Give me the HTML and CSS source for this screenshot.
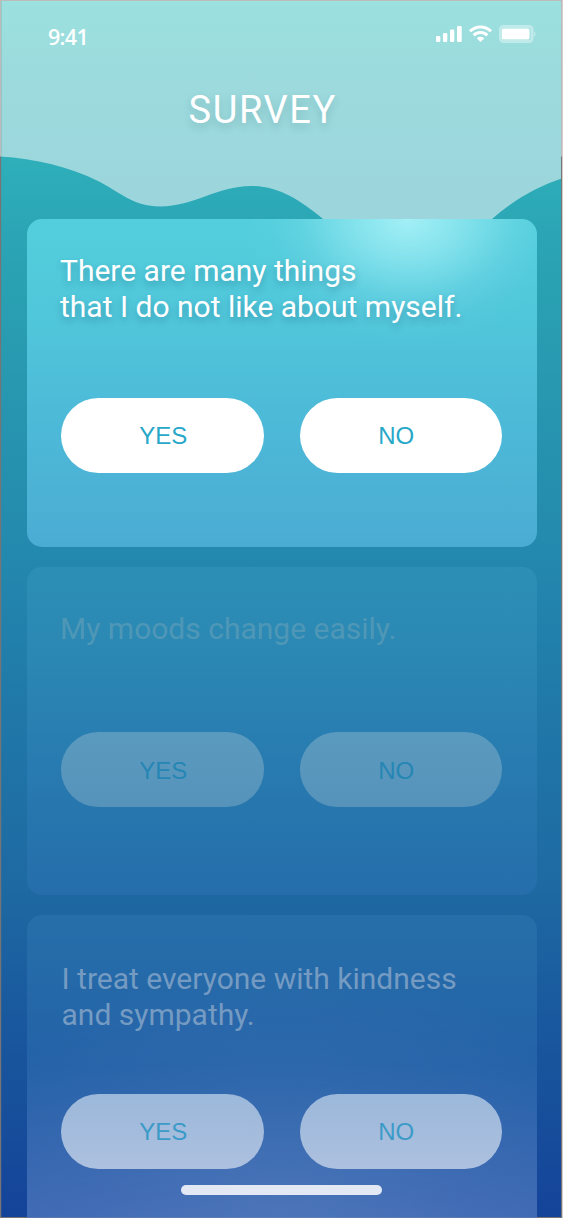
FILE: index.html
```html
<!DOCTYPE html>
<html lang="en">
<head>
<meta charset="utf-8">
<title>Survey</title>
<link rel="stylesheet" href="styles.css">
</head>
<body>
<main class="screen">
  <header class="header">
    <svg class="wave" viewBox="0 0 563 219" preserveAspectRatio="none" aria-hidden="true">
      <defs>
        <linearGradient id="sky" x1="0" y1="0" x2="0" y2="1">
          <stop offset="0" stop-color="#9be1df"/>
          <stop offset=".3" stop-color="#9cdbdd"/>
          <stop offset="1" stop-color="#9cd5dc"/>
        </linearGradient>
      </defs>
      <path fill="url(#sky)" d="M0 0H563V178C536 187 514 200 492 219H323C300 200 279 186 251 186C217 186 194 206.500 160 206.500C133 206.500 119 191.500 99 181.500C70 167 35 158.500 0 156.500Z"/>
    </svg>
    <div class="header-content">
      <div class="status">
        <span class="time">9:41</span>
        <svg class="indicators" width="102" height="20" viewBox="0 0 102 20" aria-hidden="true">
          <g fill="#fff">
            <rect x="1" y="12" width="4.300" height="6" rx="1.200"/>
            <rect x="8" y="9" width="4.300" height="9" rx="1.200"/>
            <rect x="15" y="5.500" width="4.300" height="12.500" rx="1.200"/>
            <rect x="22" y="2" width="4.700" height="16" rx="1.200"/>
            <path d="M45.500 18l-3.800-3.700a5.600 5.600 0 0 1 7.600 0z"/>
            <rect x="67" y="4.500" width="27.500" height="11" rx="1.500"/>
          </g>
          <g fill="none" stroke="#fff" stroke-width="3">
            <path d="M38.700 11.400a9.700 9.700 0 0 1 13.600 0"/>
            <path d="M35 7.300a14.900 14.900 0 0 1 21 0"/>
          </g>
          <rect x="65.500" y="2.500" width="31.500" height="15" rx="3" fill="none" stroke="#fff" stroke-opacity=".38" stroke-width="3"/>
          <path d="M99.300 7q2.300 3 0 6z" fill="#fff" opacity=".5"/>
        </svg>
      </div>
      <h1 class="title">SURVEY</h1>
    </div>
  </header>
  <div class="frame"></div>
  <div class="cards">
    <section class="card card-active">
      <p class="question">There are many things<br>that I do not like about myself.</p>
      <div class="answers"><button class="answer">YES</button><button class="answer">NO</button></div>
    </section>
    <section class="card card-next">
      <p class="question">My moods change easily.</p>
      <div class="answers"><button class="answer">YES</button><button class="answer">NO</button></div>
    </section>
    <section class="card card-later">
      <p class="question">I treat everyone with kindness<br>and sympathy.</p>
      <div class="answers"><button class="answer">YES</button><button class="answer">NO</button></div>
    </section>
  </div>
  <div class="home-indicator"></div>
</main>
</body>
</html>
```
FILE: styles.css
```css
* { box-sizing: border-box; }

body { margin: 0; }

.screen {
  position: relative;
  width: 563px;
  height: 1218px;
  overflow: hidden;
  color: #fff;
  font-family: Roboto, sans-serif;
  background: linear-gradient(#2eb0ba 150px, #2ba5b5 235px, #2898b0 380px, #2489ae 550px, #2079a9 700px, #1e69a2 890px, #19589e 1020px, #174f9b 1110px, #14439a 1218px);
}

.header { display: grid; height: 219px; }
.wave, .header-content { grid-area: 1 / 1; }
.wave { width: 563px; height: 219px; }
.header-content { position: relative; }

.status {
  display: flex;
  justify-content: space-between;
  align-items: flex-start;
  padding: 22px 26px 0 48px;
  height: 84px;
}

.time {
  font: 600 21.500px/30px "Open Sans", sans-serif;
  letter-spacing: -.7px;
}

.indicators { margin-top: 2px; }

.title {
  margin: 0 0 0 188.500px;
  font-size: 38px;
  font-weight: 400;
  line-height: 52px;
  letter-spacing: 1.600px;
  text-shadow: 0 4px 8px rgba(0, 70, 80, .2);
}

.cards {
  position: relative;
  display: grid;
  grid-template-rows: 328px 328px 303px;
  gap: 20px;
  padding: 0 26px 0 27px;
}

.card {
  display: flex;
  flex-direction: column;
  justify-content: space-between;
  padding: 34px 34px 75px;
  border-radius: 15px;
}

.card-active {
  padding-bottom: 74.500px;
  background:
    radial-gradient(ellipse 165px 125px at 381px 0, rgba(170, 242, 248, .92), rgba(155, 236, 244, .68) 32%, rgba(130, 222, 236, .3) 64%, rgba(110, 212, 230, .1) 84%, rgba(100, 210, 230, 0)),
    linear-gradient(#53cfdc, #50c5da 34%, #4dbad8 60%, #4bacd3);
}

.card-next {
  padding-top: 44px;
  padding-bottom: 88px;
  background: linear-gradient(#2d8fb5, #2b88b4 25%, #287bb0 60%, #256eab);
}

.card-later {
  padding-top: 46px;
  padding-bottom: 49.500px;
  border-radius: 15px 15px 0 0;
  background:
    radial-gradient(ellipse 340px 260px at 50% 100%, rgba(110, 145, 195, .3), rgba(90, 130, 190, .15) 60%, rgba(80, 120, 190, 0)),
    linear-gradient(rgba(43, 117, 174, .62), rgba(45, 108, 176, .6) 50%, rgba(78, 118, 190, .74));
}

.question {
  margin: 0 0 0 -1px;
  font-size: 30px;
  line-height: 36px;
  white-space: nowrap;
}

.card-active .question { text-shadow: 0 4px 7px rgba(0, 70, 100, .3); }
.card-next .question { color: #4f97b7; }
.card-later .question { margin-left: .500px; color: #759bc2; }

.answers { display: flex; gap: 36px; margin-left: .400px; }

.answer {
  width: 202.500px;
  height: 75px;
  flex: none;
  padding: 2px 0 0 1px;
  border: 0;
  border-radius: 38px;
  background: #fff;
  color: #27a8c9;
  font: 24px "Liberation Sans", sans-serif;
}

.answer + .answer { padding-right: 11px; }

.card-next .answer { background: linear-gradient(#5b9abf, #5693bb); color: #2586b4; }
.card-later .answer { background: linear-gradient(#9bb8da, #adc0df); color: #3b9ac7; }

.frame {
  position: absolute;
  inset: 0;
  border: 1px solid;
  border-right-width: 2px;
  border-image: linear-gradient(#bcbabb 156px, #777475 157px) 1;
  box-shadow: inset 1px 0 rgba(120, 120, 120, .2);
  pointer-events: none;
}

.frame::after {
  content: "";
  position: absolute;
  inset: -1px -2px -1px auto;
  width: 1px;
  background: #d2cdce;
}

.home-indicator {
  position: absolute;
  bottom: 23px;
  left: 181.400px;
  width: 201px;
  height: 10.500px;
  border-radius: 6px;
  background: #e2e9f5;
}
```
